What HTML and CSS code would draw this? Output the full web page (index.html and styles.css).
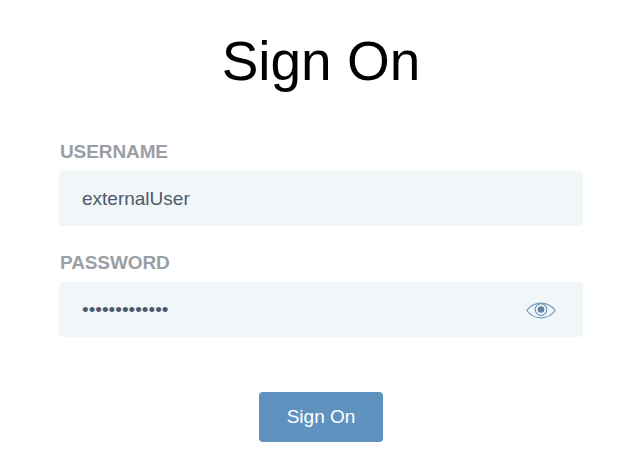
FILE: index.html
```html
<!DOCTYPE html>
<html lang="en">
<head>
<meta charset="utf-8">
<title>Sign On</title>
<link rel="stylesheet" href="styles.css">
</head>
<body>
<main class="page">
  <h1 class="title">Sign On</h1>
  <form class="form">
    <div class="field">
      <label class="label" for="u">USERNAME</label>
      <div class="input-box"><input class="input" id="u" type="text" value="externalUser"></div>
    </div>
    <div class="field">
      <label class="label" for="p">PASSWORD</label>
      <div class="input-box">
        <input class="input" id="p" type="password" value="1234567890123">
        <svg class="eye" viewBox="0 0 30 20" width="30" height="20" fill="none" stroke="#7398b6" stroke-width="1.2">
          <path d="M0.800 10.500C4.500 5.500 9.500 3.200 15 3.200S25.500 5.500 29.200 10.500C25.500 15.500 20.500 17.800 15 17.800S4.500 15.500 0.800 10.500Z"/>
          <circle cx="15" cy="9.500" r="5.800"/>
          <circle cx="15" cy="9.500" r="3.300" fill="#64809f" stroke="none"/>
        </svg>
      </div>
    </div>
    <div class="actions"><button class="button" type="button">Sign On</button></div>
  </form>
</main>
</body>
</html>
```
FILE: styles.css
```css
* { box-sizing: border-box; }
html, body { margin: 0; height: 466px; background: #fff; overflow: hidden; }
body { font-family: "Liberation Sans", Arial, sans-serif; }
.page { width: 640px; padding: 29px 57px 0 59px; }
.title { margin: 0 0 48px; text-align: center; font-size: 55px; line-height: 64px; font-weight: 400; color: #000; }
.form { display: flex; flex-direction: column; }
.field { display: flex; flex-direction: column; margin-bottom: 26px; }
.label { font-size: 19px; line-height: 22px; font-weight: 700; color: #9a9ea5; margin-bottom: 8px; letter-spacing: -0.1px; padding-left: 1px; }
.input-box { display: flex; align-items: center; height: 55px; background: #f1f6f8; border-radius: 4px; padding: 0 27px 0 23px; }
.input { flex: 1; min-width: 0; border: 0; padding: 0; background: transparent; font-family: inherit; font-size: 19px; color: #4d5a6e; outline: none; }
.eye { flex: none; }
.actions { display: flex; justify-content: center; margin-top: 29px; }
.button { width: 124px; height: 50px; border: 0; border-radius: 4px; background: #6092c0; color: #fff; font-family: inherit; font-size: 19px; }
```
